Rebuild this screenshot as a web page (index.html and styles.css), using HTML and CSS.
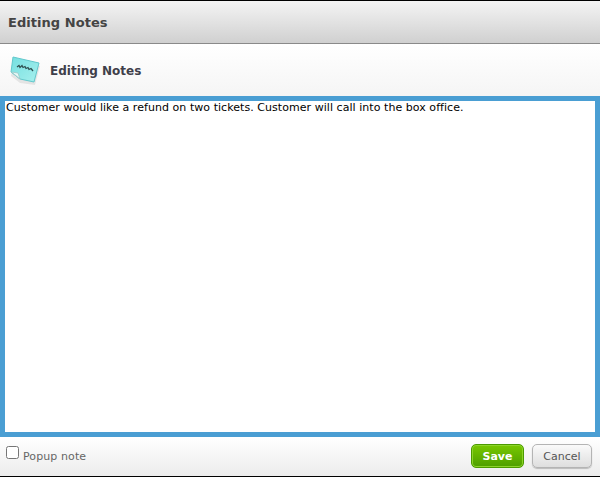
FILE: index.html
```html
<!DOCTYPE html>
<html lang="en">
<head>
<meta charset="utf-8">
<title>Editing Notes</title>
<link rel="stylesheet" href="styles.css">
</head>
<body>
<div class="dialog">
  <header class="titlebar"><h1 class="title">Editing Notes</h1></header>
  <div class="subhead">
    <svg class="note-icon" width="32" height="32" viewBox="0 0 32 32" aria-hidden="true">
      <defs>
        <linearGradient id="noteFill" x1="0" y1="0" x2="1" y2="1">
          <stop offset="0" stop-color="#74dfe0"/>
          <stop offset="1" stop-color="#a8f0ee"/>
        </linearGradient>
      </defs>
      <path d="M5 6 L31 12 L26 31 L11 29 L2 22 Z" fill="#000" opacity=".08"/>
      <path d="M4 3 L30 9 L25 28 L11 25 L2 18 Z" fill="url(#noteFill)" stroke="#62c8cc" stroke-width="1"/>
      <path d="M2.5 18 L9 19 L11 25 Z" fill="#e8f8f6" stroke="#9cc8c8" stroke-width=".8"/>
      <path d="M8 13 l2 -1.5 l1 2 l2 -2 l1 2 l2 -1 l1 2 l2 -1 l1 2 l2 -1 l2 2.5" fill="none" stroke="#2f4f50" stroke-width="1.3"/>
    </svg>
    <h2 class="subtitle">Editing Notes</h2>
  </div>
  <textarea class="notes" spellcheck="false">Customer would like a refund on two tickets. Customer will call into the box office.</textarea>
  <footer class="footer">
    <label class="popup"><input class="check" type="checkbox"><span class="popup-text">Popup note</span></label>
    <div class="actions">
      <button class="btn save" type="button">Save</button>
      <button class="btn cancel" type="button">Cancel</button>
    </div>
  </footer>
</div>
</body>
</html>
```
FILE: styles.css
```css
* { box-sizing: border-box; }
html, body { margin: 0; padding: 0; height: 100%; background: #fff; }
body { font-family: "DejaVu Sans", Verdana, sans-serif; overflow: hidden; }
.dialog {
  width: 600px;
  height: 477px;
  display: flex;
  flex-direction: column;
  border-top: 1px solid #000;
  border-bottom: 1px solid #000;
}
.titlebar {
  height: 43px;
  flex: none;
  display: flex;
  align-items: center;
  padding-left: 8px;
  background: linear-gradient(#f4f4f4, #d0d0d0);
  border-bottom: 1px solid #8a8a8a;
}
.title { margin: 1px 0 0; font-size: 13px; font-weight: bold; color: #444; letter-spacing: .05px; }
.subhead {
  height: 52px;
  flex: none;
  display: flex;
  align-items: center;
  gap: 9px;
  padding-left: 9px;
  background: linear-gradient(#fff, #f5f5f5);
}
.note-icon { flex: none; }
.subtitle { margin: 1px 0 0; font-size: 12px; font-weight: bold; color: #3f3f4a; }
.notes {
  display: block;
  width: 600px;
  height: 341px;
  flex: none;
  margin: 0;
  padding: 0 1px;
  border: 5px solid #4a9ed3;
  border-radius: 0;
  outline: none;
  resize: none;
  font-family: "DejaVu Sans", Verdana, sans-serif;
  font-size: 11px;
  line-height: 13px;
  letter-spacing: .05px;
  color: #000;
  background: #fff;
}
.footer {
  flex: 1;
  display: flex;
  align-items: center;
  justify-content: space-between;
  padding: 0 8px 1px 6px;
  background: linear-gradient(#fff, #ececec);
}
.popup { display: flex; align-items: center; gap: 4px; font-size: 11px; color: #666; }
.popup-text { letter-spacing: .1px; }
.check { width: 13px; height: 13px; margin: 0 0 7px; }
.actions { display: flex; gap: 8px; }
.btn {
  height: 24px;
  padding: 0;
  border-radius: 5px;
  font-family: "DejaVu Sans", Verdana, sans-serif;
  font-size: 11px;
}
.save {
  width: 53px;
  border: 1px solid #4c9a00;
  background: linear-gradient(#78c800, #4e9e00);
  box-shadow: inset 0 0 0 1px #8cd42a;
  color: #fff;
  font-weight: bold;
}
.cancel {
  width: 60px;
  border: 1px solid #b4b4b4;
  background: linear-gradient(#fafafa, #dedede);
  box-shadow: 0 1px 1px #bbb;
  color: #555;
}
```
